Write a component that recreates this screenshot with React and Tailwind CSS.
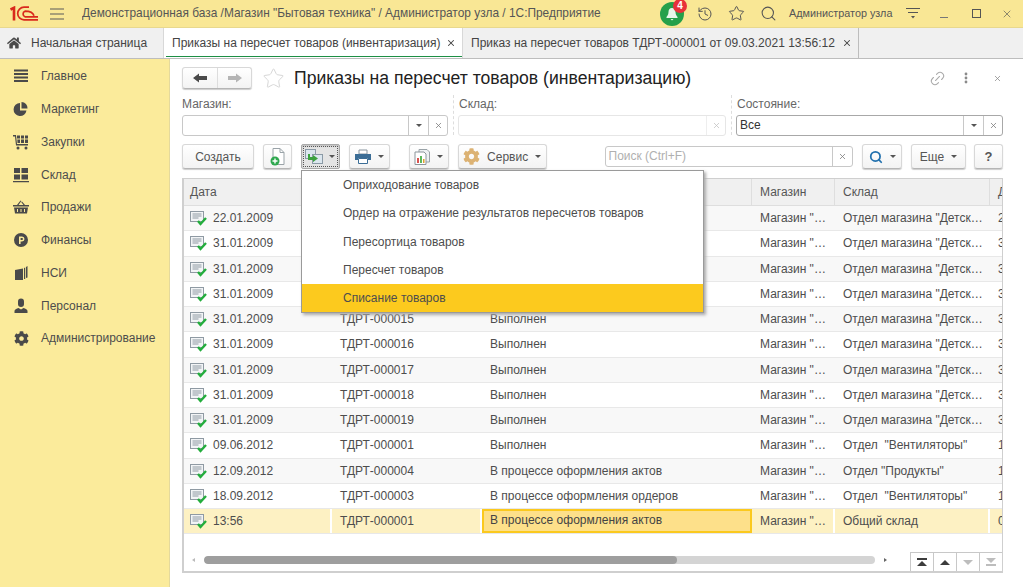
import React from 'react';
import { History, Star, Search, Link2, X } from 'lucide-react';
import { FaCog, FaHome } from 'react-icons/fa';

// Номер и состояние первых строк закрыты выпадающим меню
const ROWS = [
    { date: '22.01.2009', num: '', state: '', shop: 'Магазин "…', store: 'Отдел магазина "Детск…', d: '2' },
    { date: '31.01.2009', num: '', state: '', shop: 'Магазин "…', store: 'Отдел магазина "Детск…', d: '3' },
    { date: '31.01.2009', num: '', state: '', shop: 'Магазин "…', store: 'Отдел магазина "Детск…', d: '3' },
    { date: '31.01.2009', num: '', state: '', shop: 'Магазин "…', store: 'Отдел магазина "Детск…', d: '3' },
    { date: '31.01.2009', num: 'ТДРТ-000015', state: 'Выполнен', shop: 'Магазин "…', store: 'Отдел магазина "Детск…', d: '3' },
    { date: '31.01.2009', num: 'ТДРТ-000016', state: 'Выполнен', shop: 'Магазин "…', store: 'Отдел магазина "Детск…', d: '3' },
    { date: '31.01.2009', num: 'ТДРТ-000017', state: 'Выполнен', shop: 'Магазин "…', store: 'Отдел магазина "Детск…', d: '3' },
    { date: '31.01.2009', num: 'ТДРТ-000018', state: 'Выполнен', shop: 'Магазин "…', store: 'Отдел магазина "Детск…', d: '3' },
    { date: '31.01.2009', num: 'ТДРТ-000019', state: 'Выполнен', shop: 'Магазин "…', store: 'Отдел магазина "Детск…', d: '3' },
    { date: '09.06.2012', num: 'ТДРТ-000001', state: 'Выполнен', shop: 'Магазин "…', store: 'Отдел  "Вентиляторы"', d: '1' },
    { date: '12.09.2012', num: 'ТДРТ-000004', state: 'В процессе оформления актов', shop: 'Магазин "…', store: 'Отдел "Продукты"', d: '1' },
    { date: '18.09.2012', num: 'ТДРТ-000003', state: 'В процессе оформления ордеров', shop: 'Магазин "…', store: 'Отдел  "Вентиляторы"', d: '1' },
    { date: '13:56', num: 'ТДРТ-000001', state: 'В процессе оформления актов', shop: 'Магазин "…', store: 'Общий склад', d: '0', selected: true },
];

const MENU = [
    'Оприходование товаров',
    'Ордер на отражение результатов пересчетов товаров',
    'Пересортица товаров',
    'Пересчет товаров',
    'Списание товаров',
];

const Ico = ({ children }) => (
    <svg width="16" height="16" viewBox="0 0 16 16" fill="#4a4a4a">{children}</svg>
);

const NAV = [
    ['Главное', <Ico><path d="M1 1.500h14v2H1zM1 5h14v2H1zM1 8.500h14v2H1zM1 12h14v2H1z" /></Ico>],
    ['Маркетинг', <Ico><path d="M7 2a6.500 6.500 0 1 0 6.500 7.500H7z" /><path d="M8.500 1a6 6 0 0 1 6 6.500H8.500z" /></Ico>],
    ['Закупки', <Ico><path d="M0 1h3l1 9h11v1.500H3L2 2.500H0z" /><path d="M4 1.500h3v3H4zM8 1.500h3v3H8zM12 1.500h3v3h-3zM4.300 5.500h2.700V9H4.500zM8 5.500h3V9H8zM12 5.500h3V9h-3z" /><circle cx="5" cy="14" r="1.500" /><circle cx="13" cy="14" r="1.500" /></Ico>],
    ['Склад', <Ico><path d="M1 1h6v5H1zM8.500 1H15v5H8.500zM1 7.500h6v5H1zM8.500 7.500H15v5H8.500zM0 14h16v1.300H0z" /></Ico>],
    ['Продажи', <Ico><path d="M4 6l3.500-4.500.8.600L5.500 6h5L8.200 3l.8-.6L12 6h4v1.500H0V6z" /><path fillRule="evenodd" d="M1 8.500h14l-1 6H2zM4 10v3h1v-3zM7.500 10v3h1v-3zM11 10v3h1v-3z" /></Ico>],
    ['Финансы', <Ico><path fillRule="evenodd" d="M8 1a7 7 0 1 1 0 14A7 7 0 0 1 8 1zM6 4.500V12h1.600V9.500H9a2.500 2.500 0 0 0 0-5zM7.600 6H9a1 1 0 0 1 0 2H7.600z" /></Ico>],
    ['НСИ', <Ico><path d="M2 5l8-1.500V15H2z" /><path d="M11 3v11h1.200V2.500zM13 2v11l1.500-.5V1z" /></Ico>],
    ['Персонал', <Ico><path d="M5 3.500a3 3 0 0 1 6 0V6a3 3 0 0 1-6 0z" /><path d="M1.500 15v-2c0-1.500 2-2.500 4-3l2.500 1.500L10.500 10c2 .5 4 1.500 4 3v2z" /></Ico>],
    ['Администрирование', <FaCog className="w-[15px] h-[15px] text-[#4a4a4a]" />],
];

const DocIcon = () => (
    <svg width="18" height="16" viewBox="0 0 18 16" className="shrink-0">
        <rect x="0.500" y="1.500" width="13" height="10" fill="#f2f4f6" stroke="#8f9aa3" />
        <path d="M2.500 4h9M2.500 6h9M2.500 8h6" stroke="#8f9aa3" />
        <path d="M8 11l2.500 3L16 8" fill="none" stroke="#23ad3c" strokeWidth="2.400" />
    </svg>
);

const Caret = ({ color = '#555' }) => (
    <span className="inline-block w-0 h-0 border-l-[3px] border-r-[3px] border-t-[3px] border-l-transparent border-r-transparent" style={{ borderTopColor: color }} />
);

const Btn = ({ className = '', children }) => (
    <div className={`h-[25px] flex items-center justify-center gap-[7px] rounded-[3px] border border-[#d8d8d8] border-b-[#b5b5b5] bg-gradient-to-b from-white to-[#f3f3f3] shadow-[0_1px_1px_#cccccc] text-[#555] ${className}`}>
        {children}
    </div>
);

const Field = ({ value, disabled, className = '', strong }) => (
    <div className={`h-[21px] flex rounded-[3px] border bg-white ${strong ? 'border-[#a8a8a8]' : disabled ? 'border-[#e6e6e6]' : 'border-[#c8c8c8]'} ${className}`}>
        <div className="flex-1 px-[3px] leading-[19px] text-[#333]">{value}</div>
        {!disabled && (
            <div className="w-[20px] border-l border-[#c8c8c8] flex items-center justify-center"><Caret /></div>
        )}
        <div className={`w-[19px] flex items-center justify-center ${disabled ? 'border-l border-[#eee]' : 'border-l border-[#c8c8c8]'}`}>
            <X size={9} strokeWidth={2} color={disabled ? '#c0c0c0' : '#777'} />
        </div>
    </div>
);

const Cell = ({ className = '', children, selected }) => (
    <div className={`pl-[8px] pr-[2px] overflow-hidden whitespace-pre leading-[24px] ${selected ? 'bg-[#fdf1c3] border-r-2 border-white' : ''} ${className}`}>
        {children}
    </div>
);

const COLS = 'grid grid-cols-[148px_150px_270px_83px_155px_1fr]';

const NavBtn = ({ up, edge, on }) => {
    const c = on ? '#3c3c3c' : '#bdbdbd';
    return (
        <div className="w-[23px] h-[19px] border-l border-t border-[#c8c8c8] flex flex-col items-center justify-center gap-[1px]">
            {edge && up && <span className="w-[10px] h-[2px]" style={{ background: c }} />}
            <span className={`w-0 h-0 border-l-[5px] border-r-[5px] border-l-transparent border-r-transparent ${up ? 'border-b-[5px]' : 'border-t-[5px]'}`}
                style={up ? { borderBottomColor: c } : { borderTopColor: c }} />
            {edge && !up && <span className="w-[10px] h-[2px]" style={{ background: c }} />}
        </div>
    );
};

export default function App() {
    return (
        <div className="w-[1023px] h-[587px] overflow-hidden flex flex-col bg-white text-[12px] text-[#4d4d4d]" style={{ fontFamily: '"Liberation Sans", Arial, sans-serif' }}>
            {/* Title bar */}
            <div className="h-[28px] shrink-0 flex items-center bg-[#f9e795] border-b border-[#e8d88e]">
                <svg width="28" height="15" viewBox="0 0 28 15" className="ml-[10px]" fill="none" stroke="#d9291c">
                    <path d="M.5 3.500L4 1.800V14.500" strokeWidth="2.600" />
                    <path d="M19 1.200H14a6.200 6.200 0 0 0 0 12.600H28" strokeWidth="1.700" />
                    <path d="M24 9.800C23 6.500 20 5.200 15 5.200a3 3 0 0 0 0 5.600H28" strokeWidth="1.700" />
                </svg>
                <svg width="14" height="12" viewBox="0 0 14 12" className="ml-[12px]" stroke="#5a5a5a" strokeWidth="1.200">
                    <path d="M0 1h14M0 6h14M0 11h14" />
                </svg>
                <div className="ml-[18px] w-[560px] truncate text-[11.900px] text-[#555]">Демонстрационная база /Магазин "Бытовая техника" / Администратор узла / 1С:Предприятие</div>
                <div className="relative w-[24px] h-[24px] rounded-full bg-[#25a04a] flex items-center justify-center ml-[18px] mt-[1px]">
                    <svg width="14" height="14" viewBox="0 0 14 14" fill="#e8f6ea">
                        <path d="M7 1c-2.500 0-3.500 2-3.500 4 0 3-1.500 4-2 5v1h11v-1c-.5-1-2-2-2-5 0-2-1-4-3.500-4zM5.500 12h3L7 13.500z" />
                    </svg>
                    <span className="absolute -top-[3px] -right-[3px] w-[14px] h-[14px] rounded-full bg-[#e8313a] text-white text-[10px] font-bold leading-[14px] text-center">4</span>
                </div>
                <History size={16} color="#555" strokeWidth={1.500} className="ml-[13px]" />
                <Star size={17} color="#555" strokeWidth={1.400} className="ml-[15px]" />
                <Search size={17} color="#555" strokeWidth={1.500} className="ml-[15px]" />
                <span className="ml-[12px] w-[104px] text-[10.800px] text-[#555] whitespace-nowrap">Администратор узла</span>
                <svg width="14" height="11" viewBox="0 0 14 11" className="ml-[13px]" stroke="#555" fill="#555">
                    <path d="M0 .500h14M2 4.500h10" /><path d="M5 8h4l-2 2.500z" stroke="none" />
                </svg>
                <span className="ml-[20px] w-[8px] h-px bg-[#777] mt-[7px]" />
                <span className="ml-[24px] w-[9px] h-[9px] border border-[#555]" />
                <X size={12} color="#555" strokeWidth={1.300} className="ml-[20px]" />
            </div>

            {/* Tabs */}
            <div className="h-[31px] shrink-0 flex bg-[#f0f0f0] border-b border-[#bdbdbd]">
                <div className="w-[163px] flex items-center pl-[7px] gap-[10px] text-[#444]">
                    <FaHome className="w-[14px] h-[14px] text-[#4a4a4a]" />
                    Начальная страница
                </div>
                <div className="w-[300px] flex items-center justify-between pl-[8px] pr-[6px] bg-white border-x border-[#d8d8d8] relative text-[#444]">
                    <span className="whitespace-nowrap">Приказы на пересчет товаров (инвентаризация)</span>
                    <X size={10} strokeWidth={2.500} color="#444" />
                    <span className="absolute left-[2px] right-0 bottom-[1px] h-[1px] bg-[#1d8f45]" />
                </div>
                <div className="w-[396px] flex items-center justify-between pl-[8px] pr-[6px] border-r border-[#bdbdbd] text-[#444]">
                    <span className="whitespace-nowrap">Приказ на пересчет товаров ТДРТ-000001 от 09.03.2021 13:56:12</span>
                    <X size={10} strokeWidth={2.500} color="#444" />
                </div>
            </div>

            <div className="flex-1 flex min-h-0">
                {/* Sidebar */}
                <div className="w-[170px] shrink-0 bg-[#fbeb9b] border-r border-[#e4d99c] pt-[1px]">
                    {NAV.map(([label, icon]) => (
                        <div key={label} className="h-[32.750px] flex items-center pl-[13px] text-[#4d4d4d]">
                            <span className="w-[16px] h-[16px] flex items-center justify-center mr-[12px]">{icon}</span>
                            {label}
                        </div>
                    ))}
                </div>

                {/* Form */}
                <div className="flex-1 min-w-0 relative pl-[12px] pr-[20px] pt-[8px] flex flex-col">
                    <div className="h-[22px] flex items-center">
                        <div className="w-[70px] h-[22px] flex rounded-[3px] border border-[#d8d8d8] border-b-[#b5b5b5] bg-gradient-to-b from-white to-[#f3f3f3] shadow-[0_1px_1px_#cccccc]">
                            <div className="w-[35px] border-r border-[#ddd] flex items-center justify-center">
                                <svg width="14" height="10" viewBox="0 0 14 10" fill="#4a4a4a"><path d="M0 5l6-4.500V3h8v4H6v2.500z" /></svg>
                            </div>
                            <div className="flex-1 flex items-center justify-center">
                                <svg width="14" height="10" viewBox="0 0 14 10" fill="#b5b5b5"><path d="M14 5L8 .500V3H0v4h8v2.500z" /></svg>
                            </div>
                        </div>
                        <Star size={23} color="#d4d4d4" strokeWidth={1} className="ml-[10px]" />
                        <div className="ml-[9px] text-[17.600px] text-[#222] whitespace-nowrap">Приказы на пересчет товаров (инвентаризацию)</div>
                        <div className="ml-auto flex items-center text-[#999]">
                            <Link2 size={17} strokeWidth={1.500} color="#aaa" className="-rotate-45" />
                            <svg width="4" height="12" viewBox="0 0 4 12" fill="#8a8a8a" className="ml-[18px]"><circle cx="2" cy="2" r="1.400" /><circle cx="2" cy="6" r="1.400" /><circle cx="2" cy="10" r="1.400" /></svg>
                            <X size={9} strokeWidth={2} color="#888" className="ml-[25px] mr-[1px]" />
                        </div>
                    </div>

                    {/* Filters */}
                    <div className="mt-[6px] h-[40px] flex text-[#666]">
                        <div className="w-[266px] shrink-0">
                            <div className="h-[20px] leading-[19px]">Магазин:</div>
                            <Field />
                        </div>
                        <div className="w-[278px] shrink-0 ml-[5px] border-l border-dashed border-[#ddd] pl-[4px] pr-[5px]">
                            <div className="h-[20px] leading-[19px] pl-[1px]">Склад:</div>
                            <Field disabled />
                        </div>
                        <div className="flex-1 border-l border-dashed border-[#ddd] pl-[4px]">
                            <div className="h-[20px] leading-[19px] pl-[1px]">Состояние:</div>
                            <Field value="Все" strong />
                        </div>
                    </div>

                    {/* Toolbar */}
                    <div className="mt-[9px] h-[25px] flex items-center">
                        <Btn className="w-[72px]">Создать</Btn>
                        <Btn className="w-[29px] ml-[9px]">
                            <svg width="15" height="18" viewBox="0 0 15 18">
                                <path d="M3 .500h7l4 4v12H3z" fill="#fff" stroke="#9aa3a8" />
                                <path d="M10 .500v4h4" fill="none" stroke="#9aa3a8" />
                                <circle cx="5" cy="13" r="4.500" fill="#2fa84f" />
                                <path d="M2.500 13h5M5 10.500v5" stroke="#fff" strokeWidth="1.400" />
                            </svg>
                        </Btn>
                        <div className="relative w-[39px] h-[25px] ml-[9px] rounded-[2px] bg-[#e4e4e4] border border-[#aaa] flex items-center justify-center gap-[6px] shadow-[inset_0_1px_2px_#bbb]">
                            <span className="absolute inset-[1px] border border-dotted border-[#555]" />
                            <svg width="18" height="15" viewBox="0 0 18 15">
                                <rect x="0.500" y="0.500" width="10" height="9" fill="#dbe6ee" stroke="#8b9aa6" />
                                <rect x="7.500" y="5.500" width="10" height="9" fill="#dbe6ee" stroke="#8b9aa6" />
                                <path d="M3 5h2v3h3V6l5 3.500L8 13v-2H3z" fill="#3ba23f" />
                            </svg>
                            <Caret />
                        </div>
                        <Btn className="w-[41px] ml-[9px]">
                            <svg width="16" height="15" viewBox="0 0 16 15">
                                <path d="M4 1h8v4H4z" fill="#fff" stroke="#88959f" />
                                <path d="M0 5h16v6h-3V9H3v2H0z" fill="#3b6d96" />
                                <path d="M3.500 9.500h9v5h-9z" fill="#fff" stroke="#3b6d96" />
                            </svg>
                            <Caret />
                        </Btn>
                        <Btn className="w-[40px] ml-[19px]">
                            <svg width="16" height="16" viewBox="0 0 16 16">
                                <path d="M5 .500h8l2.500 2.500v10H5z" fill="#eef1f3" stroke="#9aa3a8" />
                                <path d="M1 3h9l2 2v10.500H1z" fill="#fff" stroke="#8c959b" />
                                <path d="M3 9h2v5H3z" fill="#d9534f" /><path d="M6 7h2v7H6z" fill="#5cb85c" /><path d="M9 10h1.500v4H9z" fill="#e0a030" />
                            </svg>
                            <Caret />
                        </Btn>
                        <Btn className="w-[89px] ml-[9px]">
                            <FaCog className="w-[17px] h-[17px] text-[#dcb273]" />
                            Сервис
                            <Caret />
                        </Btn>
                        <div className="ml-[58px] w-[249px] h-[21px] flex rounded-[3px] border border-[#c8c8c8] bg-white">
                            <div className="flex-1 px-[3px] leading-[19px] text-[#b0b0b0]">Поиск (Ctrl+F)</div>
                            <div className="w-[20px] border-l border-[#c8c8c8] flex items-center justify-center"><X size={9} strokeWidth={2} color="#777" /></div>
                        </div>
                        <Btn className="w-[40px] ml-[9px]">
                            <Search size={14} strokeWidth={3} color="#2170ad" />
                            <Caret />
                        </Btn>
                        <Btn className="w-[55px] ml-[9px]">Еще <Caret /></Btn>
                        <Btn className="w-[29px] ml-[8px] font-bold text-[13px] text-[#333]">?</Btn>
                    </div>

                    {/* Table */}
                    <div className="mt-[9px] h-[395px] border border-[#cfcfcf] border-b-2 border-l-2 flex flex-col overflow-hidden">
                        <div className={`${COLS} h-[27px] shrink-0 bg-[#f0f0f0] border-b border-[#dedede] text-[#555] leading-[26px]`}>
                            {['Дата', '', '', 'Магазин', 'Склад', 'Д'].map((h, i) => (
                                <div key={i} className="px-[8px] first:pl-[6px] border-r border-[#dedede] last:border-r-0 overflow-hidden">{h}</div>
                            ))}
                        </div>
                        {ROWS.map((r, i) => (
                            <div key={i} className={`${COLS} h-[25.250px] shrink-0 border-b border-[#e8e8e8] ${r.selected || i % 2 ? 'bg-white' : 'bg-[#f8f8f8]'}`}>
                                <Cell selected={r.selected} className="flex items-center gap-[5px] !pl-[6px]"><DocIcon />{r.date}</Cell>
                                <Cell selected={r.selected}>{r.num}</Cell>
                                {r.selected
                                    ? <div className="px-[6px] truncate leading-[19px] bg-[#fde08a] border-2 border-[#fbc91e] text-[#444]">{r.state}</div>
                                    : <Cell>{r.state}</Cell>}
                                <Cell selected={r.selected}>{r.shop}</Cell>
                                <Cell selected={r.selected}>{r.store}</Cell>
                                <Cell selected={r.selected} className="!border-r-0">{r.d}</Cell>
                            </div>
                        ))}
                        <div className="flex-1" />
                        <div className="h-[20px] shrink-0 flex items-end">
                            <div className="flex-1 h-[20px] flex items-center pb-[2px] pl-[8px]">
                                <span className="w-0 h-0 border-y-[2px] border-r-[3px] border-y-transparent border-r-[#bbb]" />
                                <div className="ml-[9px] w-[671px] h-[8px] rounded-full bg-[#d4d4d4] overflow-hidden">
                                    <div className="w-[473px] h-full rounded-full bg-[#9e9e9e]" />
                                </div>
                                <span className="ml-[9px] w-0 h-0 border-y-[2px] border-l-[3px] border-y-transparent border-l-[#666]" />
                            </div>
                            <div className="flex">
                                <NavBtn up edge on />
                                <NavBtn up on />
                                <NavBtn />
                                <NavBtn edge />
                            </div>
                        </div>
                    </div>

                    {/* Dropdown */}
                    <div className="absolute left-[131px] top-[111px] w-[403px] h-[143px] bg-white border border-[#9a9a9a] shadow-[2px_2px_3px_#aaa]">
                        {MENU.map((m, i) => (
                            <div key={m} className={`h-[28.250px] leading-[28px] pl-[41px] text-[#4d4d4d] ${i === 4 ? 'bg-[#fcca1e]' : ''}`}>{m}</div>
                        ))}
                    </div>
                </div>
            </div>
        </div>
    );
}
